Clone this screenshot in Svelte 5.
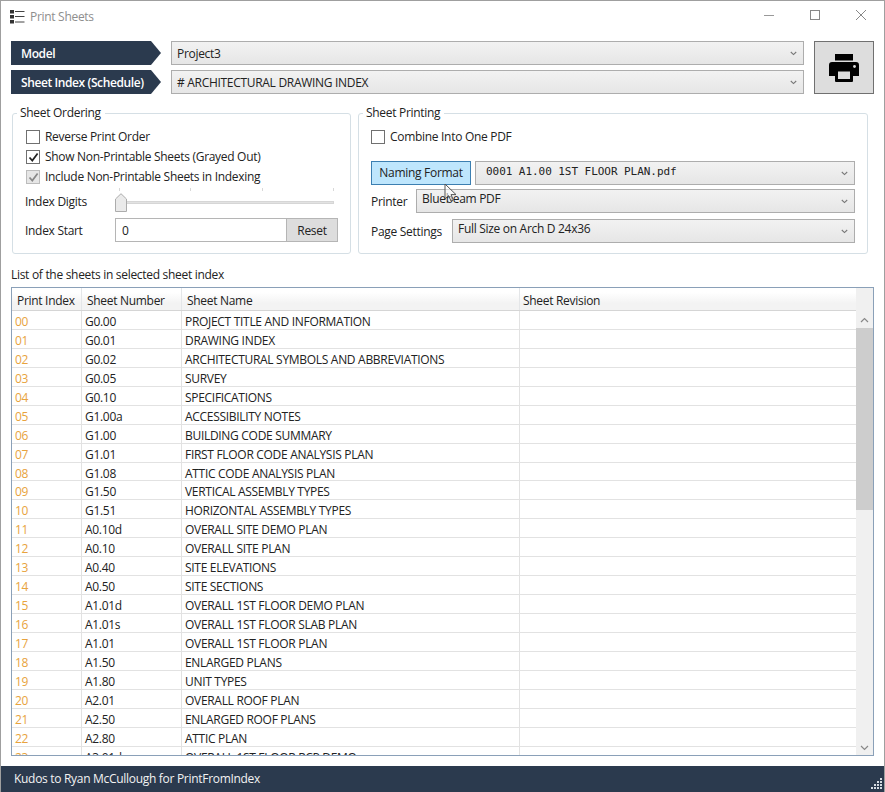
<script>
  const rows = [
    ['00','G0.00','PROJECT TITLE AND INFORMATION'],['01','G0.01','DRAWING INDEX'],['02','G0.02','ARCHITECTURAL SYMBOLS AND ABBREVIATIONS'],
    ['03','G0.05','SURVEY'],['04','G0.10','SPECIFICATIONS'],['05','G1.00a','ACCESSIBILITY NOTES'],['06','G1.00','BUILDING CODE SUMMARY'],
    ['07','G1.01','FIRST FLOOR CODE ANALYSIS PLAN'],['08','G1.08','ATTIC CODE ANALYSIS PLAN'],['09','G1.50','VERTICAL ASSEMBLY TYPES'],
    ['10','G1.51','HORIZONTAL ASSEMBLY TYPES'],['11','A0.10d','OVERALL SITE DEMO PLAN'],['12','A0.10','OVERALL SITE PLAN'],
    ['13','A0.40','SITE ELEVATIONS'],['14','A0.50','SITE SECTIONS'],['15','A1.01d','OVERALL 1ST FLOOR DEMO PLAN'],
    ['16','A1.01s','OVERALL 1ST FLOOR SLAB PLAN'],['17','A1.01','OVERALL 1ST FLOOR PLAN'],['18','A1.50','ENLARGED PLANS'],
    ['19','A1.80','UNIT TYPES'],['20','A2.01','OVERALL ROOF PLAN'],['21','A2.50','ENLARGED ROOF PLANS'],['22','A2.80','ATTIC PLAN'],
    ['23','A3.01d','OVERALL 1ST FLOOR RCP DEMO']
  ];
</script>

{#snippet chev()}
  <svg class="chev" width="7" height="5" viewBox="0 0 7 5"><path d="M.8 1L3.5 3.6L6.2 1" fill="none" stroke="#777" stroke-width="1.1"/></svg>
{/snippet}

<div class="win">
  <header class="title">
    <svg width="15" height="14" viewBox="0 0 15 14" class="appicon">
      <rect x="0" y="0" width="4" height="3.5" fill="#333"/><rect x="0" y="5" width="4" height="3.5" fill="#333"/><rect x="0" y="10" width="4" height="3.5" fill="#333"/>
      <path d="M5 1.5H14.5M5 6.5H14.5M5 12H14.5" stroke="#444" stroke-width="1"/>
    </svg>
    <span class="ttext">Print Sheets</span>
    <div class="wbtns">
      <svg width="12" height="12" viewBox="0 0 12 12"><path d="M1 6.5H11" stroke="#999" stroke-width="1"/></svg>
      <svg width="12" height="12" viewBox="0 0 12 12"><rect x="1.5" y="1.5" width="9" height="9" fill="none" stroke="#888"/></svg>
      <svg width="12" height="12" viewBox="0 0 12 12"><path d="M1 1L11 11M11 1L1 11" stroke="#888" stroke-width="1"/></svg>
    </div>
  </header>

  <section class="top">
    <div class="selectors">
      <div class="srow">
        <div class="tag">Model</div>
        <div class="combo grow"><span>Project3</span>{@render chev()}</div>
      </div>
      <div class="srow">
        <div class="tag">Sheet Index (Schedule)</div>
        <div class="combo grow"><span># ARCHITECTURAL DRAWING INDEX</span>{@render chev()}</div>
      </div>
    </div>
    <div class="printbtn">
      <svg width="30" height="28" viewBox="0 0 30 28">
        <rect x="6" y="0" width="18" height="6.5" fill="#000"/>
        <path d="M3 8H27a3 3 0 0 1 3 3V22H24V27a1 1 0 0 1-1 1H7a1 1 0 0 1-1-1V22H0V11a3 3 0 0 1 3-3Z" fill="#000"/>
        <rect x="9" y="17.5" width="12" height="7.5" fill="#dcdcdc"/>
        <circle cx="25.5" cy="12.5" r="1.4" fill="#dcdcdc"/>
      </svg>
    </div>
  </section>

  <section class="groups">
    <fieldset class="g left">
      <legend>Sheet Ordering</legend>
      <div class="chk first"><span class="box"></span>Reverse Print Order</div>
      <div class="chk"><span class="box"><svg width="11" height="11" viewBox="0 0 11 11"><path d="M1.5 5.5L4.3 8.6L9.6 1.6" fill="none" stroke="#222" stroke-width="1.7"/></svg></span>Show Non-Printable Sheets (Grayed Out)</div>
      <div class="chk"><span class="box dis"><svg width="11" height="11" viewBox="0 0 11 11"><path d="M1.5 5.5L4.3 8.6L9.6 1.6" fill="none" stroke="#888" stroke-width="1.7"/></svg></span>Include Non-Printable Sheets in Indexing</div>
      <div class="sliderrow">
        <span class="flabel">Index Digits</span>
        <div class="slider">
          <div class="ticks"><i></i><i></i><i></i><i></i></div>
          <div class="track"></div>
          <svg class="thumb" width="12" height="19" viewBox="0 0 12 19"><path d="M.5 18.5V6L6 .7L11.5 6V18.5Z" fill="#eaeaea" stroke="#acacac"/></svg>
        </div>
      </div>
      <div class="startrow">
        <span class="flabel start">Index Start</span>
        <div class="input"><span class="val">0</span><span class="reset">Reset</span></div>
      </div>
    </fieldset>

    <fieldset class="g right">
      <legend>Sheet Printing</legend>
      <div class="chk first"><span class="box"></span>Combine Into One PDF</div>
      <div class="prow firstrow">
        <div class="naming">Naming Format</div>
        <div class="combo grow mono"><span>0001 A1.00 1ST FLOOR PLAN.pdf</span>{@render chev()}</div>
      </div>
      <div class="prow second">
        <span class="plabel pr">Printer</span>
        <div class="combo grow"><span>Bluebeam PDF</span>{@render chev()}</div>
      </div>
      <div class="prow last">
        <span class="plabel ps">Page Settings</span>
        <div class="combo grow"><span>Full Size on Arch D 24x36</span>{@render chev()}</div>
      </div>
      <svg class="cursor" width="14" height="20" viewBox="0 0 14 20"><path d="M1 1V16L4.6 12.6L7 18L9.4 17L7 11.6H12Z" fill="#fff" fill-opacity=".55" stroke="#555" stroke-width="1"/></svg>
    </fieldset>
  </section>

  <div class="listlabel">List of the sheets in selected sheet index</div>

  <section class="table">
    <div class="main">
      <div class="thead">
        <div class="c c1">Print Index</div><div class="c c2">Sheet Number</div><div class="c c3">Sheet Name</div><div class="c c4">Sheet Revision</div>
      </div>
      {#each rows as r}
        <div class="tr">
          <div class="c c1 idx">{r[0]}</div><div class="c c2">{r[1]}</div><div class="c c3">{r[2]}</div><div class="c c4"></div>
        </div>
      {/each}
    </div>
    <div class="sbar">
      <svg class="up" width="9" height="6" viewBox="0 0 9 6"><path d="M1 5L4.5 1.5L8 5" fill="none" stroke="#888" stroke-width="1.2"/></svg>
      <div class="sthumb"></div>
      <svg class="down" width="9" height="6" viewBox="0 0 9 6"><path d="M1 1L4.5 4.5L8 1" fill="none" stroke="#888" stroke-width="1.2"/></svg>
    </div>
  </section>

  <footer class="foot">
    <span>Kudos to Ryan McCullough for PrintFromIndex</span>
    <svg class="grip" width="12" height="12" viewBox="0 0 12 12" fill="#d5dbe2">
      <rect x="9" y="0" width="2" height="2"/><rect x="9" y="3" width="2" height="2"/><rect x="6" y="3" width="2" height="2"/>
      <rect x="9" y="6" width="2" height="2"/><rect x="6" y="6" width="2" height="2"/><rect x="3" y="6" width="2" height="2"/>
      <rect x="9" y="9" width="2" height="2"/><rect x="6" y="9" width="2" height="2"/><rect x="3" y="9" width="2" height="2"/><rect x="0" y="9" width="2" height="2"/>
    </svg>
  </footer>
</div>

<style>
  :global(body) { margin: 0; background: #fff; }
  .win {
    width: 885px; height: 792px; box-sizing: border-box; overflow: hidden; position: relative;
    border: 1px solid #9f9f9f; border-bottom: 0; background: #fff; color: #222;
    font: 12px/16px "Open Sans", "Noto Sans", sans-serif; letter-spacing: -0.3px;
    display: flex; flex-direction: column;
  }
  .title { height: 40px; flex: none; display: flex; align-items: flex-start; padding: 9px 0 0 9px; box-sizing: border-box; }
  .appicon { margin-right: 5px; }
  .ttext { color: #8e8e8e; line-height: 14px; font-size: 12px; }
  .wbtns { margin-left: auto; margin-top: -1px; display: flex; gap: 34px; padding-right: 17px; }
  .top { display: flex; padding: 0 10px; gap: 10px; height: 53px; flex: none; }
  .selectors { flex: 1; display: flex; flex-direction: column; gap: 5px; }
  .srow { display: flex; height: 24px; gap: 10px; }
  .tag {
    width: 150px; flex: none; background: #2b3a4e; color: #fff; font-weight: 600; line-height: 26px; padding-left: 10px; box-sizing: border-box;
    clip-path: polygon(0 0, 140px 0, 100% 50%, 140px 100%, 0 100%);
    letter-spacing: -0.4px;
  }
  .combo {
    display: flex; align-items: center; justify-content: space-between; box-sizing: border-box; height: 24px;
    background: linear-gradient(#f2f2f2, #e6e6e6); border: 1px solid #adadad; padding: 0 6px 0 5px; color: #222; min-width: 0;
  }
  .srow .combo span { padding-top: 1px; }
  .grow { flex: 1; }
  .chev { flex: none; }
  .printbtn { width: 60px; flex: none; box-sizing: border-box; background: #dddddd; border: 1px solid #707070; display: flex; align-items: center; justify-content: center; }
  .groups { display: flex; gap: 7px; padding: 11px 0 0 11px; flex: none; }
  fieldset.g { margin: 0; box-sizing: border-box; border: 1px solid #d5dfe5; border-radius: 3px; height: 149px; position: relative; min-width: 0; padding: 0 12px; }
  legend { padding: 0 4px 0 3px; margin-left: -8px; line-height: 16px; }
  .left { width: 339px; }
  .right { width: 510px; }
  .chk { display: flex; align-items: center; height: 20px; }
  .chk.first { margin-top: 6px; }
  .box { width: 14px; height: 14px; border: 1px solid #707070; box-sizing: border-box; margin-right: 5px; display: flex; align-items: center; justify-content: center; background: #fff; flex: none; }
  .left .box { margin-left: 1px; }
  .box.dis { border-color: #bcbcbc; background: #e6e6e6; }
  .sliderrow { display: flex; height: 29px; align-items: center; }
  .flabel { width: 90px; flex: none; }
  .flabel.start { padding-top: 2px; }
  .slider { flex: 1; position: relative; height: 29px; margin-right: 4px; }
  .ticks { position: absolute; left: 4px; right: 0; top: 1px; display: flex; justify-content: space-between; }
  .ticks i { width: 1px; height: 3px; background: #d8d8d8; }
  .track { position: absolute; left: 0; right: 0; top: 14px; height: 3px; background: #e2e2e2; border: 1px solid #d6d6d6; box-sizing: border-box; }
  .thumb { position: absolute; left: 0; top: 6px; }
  .startrow { display: flex; align-items: center; height: 24px; margin-top: 2px; }
  .input { flex: 1; height: 24px; box-sizing: border-box; border: 1px solid #b5b5b5; display: flex; justify-content: space-between; align-items: stretch; }
  .val { padding-left: 6px; line-height: 24px; }
  .reset { width: 50px; background: #dddddd; border-left: 1px solid #b5b5b5; text-align: center; line-height: 24px; }
  .prow { display: flex; align-items: center; height: 24px; margin-top: 5px; }
  .prow.firstrow { margin-top: 14px; }
  .prow.second { margin-top: 4px; }
  .prow.last { margin-top: 6px; }
  .prow .combo span { white-space: nowrap; padding-bottom: 4px; }
  .prow .mono span { padding-bottom: 2px; }
  .naming { width: 100px; flex: none; height: 24px; box-sizing: border-box; background: #bee6fd; border: 1px solid #3c7fb1; text-align: center; line-height: 22px; margin-right: 4px; }
  .mono { font-family: "DejaVu Sans Mono", "Liberation Mono", monospace; font-size: 11px; letter-spacing: -0.05px; padding-left: 10px; }
  .plabel { flex: none; padding-top: 2px; }
  .pr { width: 45px; }
  .ps { width: 81px; }
  .cursor { position: absolute; left: 85px; top: 62px; }
  .listlabel { margin: 13px 0 0 10px; height: 16px; line-height: 16px; flex: none; }
  .table {
    margin: 4px 10px 0 10px; height: 469px; box-sizing: border-box; flex: none; border: 1px solid #8aa0b8;
    display: flex; overflow: hidden; background: #fff;
  }
  .main { flex: 1; min-width: 0; overflow: hidden; }
  .thead { display: flex; height: 23px; background: linear-gradient(#fff 20%, #f3f3f3 70%); border-bottom: 1px solid #d5d5d5; box-sizing: border-box; }
  .thead .c { line-height: 26px; padding-left: 5px; border-right-color: #e4e6e8; }
  .thead .c4 { padding-left: 3px; }
  .tr { display: flex; height: 18.95px; box-sizing: border-box; border-bottom: 1px solid #e2e2e2; }
  .c { box-sizing: border-box; border-right: 1px solid #e2e2e2; padding-left: 3px; line-height: 22px; white-space: nowrap; overflow: hidden; }
  .c1 { width: 70px; }
  .c2 { width: 100px; }
  .c3 { width: 338px; }
  .c4 { flex: 1; border-right: 0; }
  .idx { color: #e8a33d; }
  .sbar { width: 17px; flex: none; background: #f0f0f0; position: relative; }
  .up { position: absolute; left: 4px; top: 29px; }
  .down { position: absolute; left: 4px; bottom: 4px; }
  .sthumb { position: absolute; left: 0; right: 0; top: 40px; height: 182px; background: #cdcdcd; }
  .foot {
    margin-top: 10px; flex: 1; background: #2b3a4e; color: #f2f2f2; display: flex; align-items: center; justify-content: space-between;
    padding: 0 0 0 13px; position: relative;
  }
  .grip { position: absolute; right: 1px; bottom: 2px; }
</style>
